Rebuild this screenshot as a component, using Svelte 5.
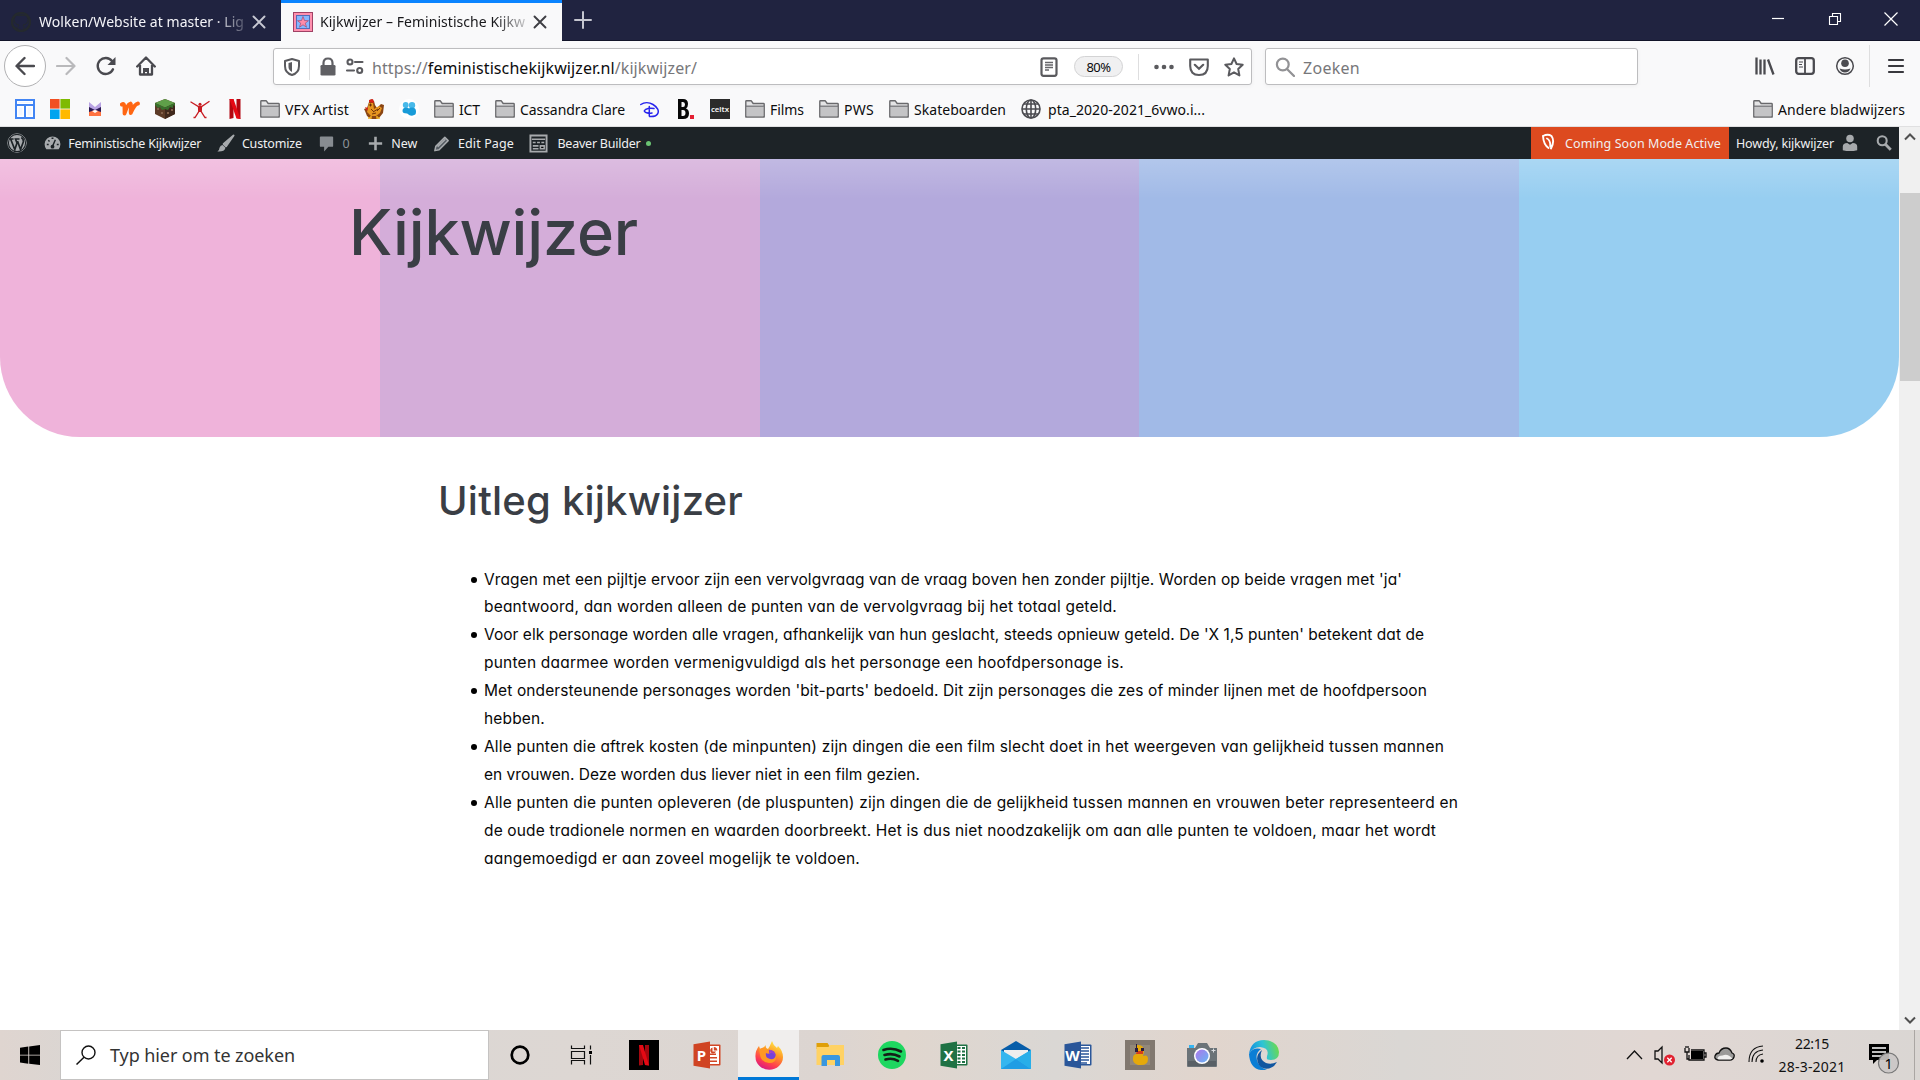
<script>
  // Tracks the text of a label so that it fills the given width in pixels.
  function fit(node, width) {
    const natural = node.getBoundingClientRect().width;
    node.style.letterSpacing = (width - natural) / node.textContent.length + 'px';
  }

  const bookmarks = [
    { icon: 'panel' }, { icon: 'microsoft' }, { icon: 'cat' }, { icon: 'wattpad' },
    { icon: 'block' }, { icon: 'figure' }, { icon: 'netflix' },
    { icon: 'folder', label: 'VFX Artist', width: 64 },
    { icon: 'chicken' }, { icon: 'people' },
    { icon: 'folder', label: 'ICT', width: 21 },
    { icon: 'folder', label: 'Cassandra Clare', width: 105 },
    { icon: 'disney' }, { icon: 'bdot' }, { icon: 'celtx' },
    { icon: 'folder', label: 'Films', width: 34 },
    { icon: 'folder', label: 'PWS', width: 30 },
    { icon: 'folder', label: 'Skateboarden', width: 92 },
    { icon: 'globe', label: 'pta_2020-2021_6vwo.i...', width: 157 }
  ];

  const items = [
    [
      ["Vragen met een pijltje ervoor zijn een vervolgvraag van de vraag boven hen zonder pijltje. Worden op beide vragen met 'ja'", 918],
      ['beantwoord, dan worden alleen de punten van de vervolgvraag bij het totaal geteld.', 633]
    ],
    [
      ["Voor elk personage worden alle vragen, afhankelijk van hun geslacht, steeds opnieuw geteld. De 'X 1,5 punten' betekent dat de", 940],
      ['punten daarmee worden vermenigvuldigd als het personage een hoofdpersonage is.', 640]
    ],
    [
      ["Met ondersteunende personages worden 'bit-parts' bedoeld. Dit zijn personages die zes of minder lijnen met de hoofdpersoon", 943],
      ['hebben.', 61]
    ],
    [
      ['Alle punten die aftrek kosten (de minpunten) zijn dingen die een film slecht doet in het weergeven van gelijkheid tussen mannen', 960],
      ['en vrouwen. Deze worden dus liever niet in een film gezien.', 436]
    ],
    [
      ['Alle punten die punten opleveren (de pluspunten) zijn dingen die de gelijkheid tussen mannen en vrouwen beter representeerd en', 974],
      ['de oude tradionele normen en waarden doorbreekt. Het is dus niet noodzakelijk om aan alle punten te voldoen, maar het wordt', 952],
      ['aangemoedigd er aan zoveel mogelijk te voldoen.', 376]
    ]
  ];

  const apps = ['cortana', 'taskview', 'netflixapp', 'powerpoint', 'firefox', 'explorer', 'spotify', 'excel', 'mail', 'word', 'duck', 'camera', 'edge'];
</script>

{#snippet icon(name)}
  <svg class="ic" viewBox="0 0 20 20" aria-hidden="true">
    {#if name === 'panel'}
      <rect width="20" height="20" fill="#4285f4" /><path d="M2 2h16v3H2zM2 7h7v11H2zM11 7h7v11h-7z" fill="#fff" /><path d="M3 3h14v1H3zM3.500 8.500h4v8h-4zM12.500 8.500h4v8h-4z" fill="#f1f5ff" />
    {:else if name === 'microsoft'}
      <path d="M0 0h9.600v9.600H0z" fill="#f25022" /><path d="M10.400 0H20v9.600h-9.600z" fill="#7fba00" /><path d="M0 10.400h9.600V20H0z" fill="#00a4ef" /><path d="M10.400 10.400H20V20h-9.600z" fill="#ffb900" />
    {:else if name === 'cat'}
      <path d="M4 3l6 5 6-5v10H4z" fill="#b9a3e3" /><path d="M4 8l6 3 6-3v5H4z" fill="#2c1b54" /><path d="M4 13l6-2 6 2v4H4z" fill="#ff7240" /><path d="M7 12l3 2 3-2-3-1z" fill="#fff" />
    {:else if name === 'wattpad'}
      <path d="M1.800 5.500C5 3 4.500 9 4.500 14.500 6.500 9 8 5 10.500 4.500c1.800 1-.5 6 .3 9.500C12.500 10 14.500 5 18 4.500" fill="none" stroke="#ff6612" stroke-width="3.800" stroke-linecap="round" stroke-linejoin="round" />
    {:else if name === 'block'}
      <path d="M0 4l10-4 10 4v11l-10 5-10-5z" fill="#5c3b27" /><path d="M10 8l10-4v11l-10 5z" fill="#3f281c" /><path d="M0 4l10-4 10 4-10 4.500z" fill="#5f9f49" /><path d="M0 4l10 4.500L20 4v3l-2-1v3l-3-1-2 3-3-1-3 1-2-3-2 1-3-3z" fill="#38702c" /><path d="M2 9h2v2H2zM6 13h2v2H6zM12 13h2v2h-2zM16 10h2v2h-2z" fill="#82604a" />
    {:else if name === 'figure'}
      <path d="M.5 2.800L8 7.300h4l7.500-5M8.500 7.500l.3 5L5 18.500H3.500M11.500 7.500l-.3 5 3.800 6h1.500" fill="none" stroke="#c81c22" stroke-width="1.300" /><path d="M8 7h4l-.6 6H8.600z" fill="#c81c22" /><circle cx="10" cy="5.300" r="1.500" fill="#c81c22" />
    {:else if name === 'netflix'}
      <path d="M4.500 0h4v19l-4 1zM11.500 0h4v20l-4-1z" fill="#b20710" /><path d="M4.500 0h4l7 20-4-.5z" fill="#e50914" />
    {:else if name === 'folder'}
      <path d="M.8 18V2.500q0-.7.700-.7h4.800l1.900 2.700h10.300q.7 0 .7.700V18z" fill="#e4e4e5" stroke="#69696c" stroke-width="1.400" stroke-linejoin="round" /><path d="M2 8h16v9.200H2z" fill="#c4c4c6" /><path d="M1 7.200h18" stroke="#737376" stroke-width="1.300" />
    {:else if name === 'chicken'}
      <path d="M5 3l2-3 3 2 1 4 2 3 4-4 3 1-1 8-4 5-2 1H7l-4-3-2-5-1-2 3-1z" fill="#8a4512" /><path d="M5 4h4l1 6 5-3 3 2-2 5-4 3H7l-4-4 1-5z" fill="#e69520" /><path d="M5 3V1l4-1 1 4zM1 8l3 1-1 3z" fill="#d92118" /><path d="M6 5h1v2H6zM9 13l5-3M7 10l3 3M13 12l3-3M8 15l4-1" stroke="#743509" stroke-width="1" /><path d="M7 17v2H4M13 17v2h3" fill="none" stroke="#eead22" stroke-width="1.500" />
    {:else if name === 'people'}
      <circle cx="10" cy="10" r="10" fill="#fff" /><circle cx="6.700" cy="6" r="2.900" fill="#48b9e9" /><circle cx="13" cy="6.300" r="3.200" fill="#48b9e9" /><path d="M3.500 12q0-3.500 3.500-3.500 2 0 3 1 1-1 3-1 4 0 4 4 0 3.500-2 3.500-2 1.500-5 0-1-1.500-2-1.500-4.500 0-4.500-2.500z" fill="#189bd8" />
    {:else if name === 'disney'}
      <path d="M.8 5.500C4 3.300 9 3 13 5.500c4.500 2.700 6.500 6.500 4.500 9.500-1.500 2.300-5 2.700-8 2.500M14 9.500c-4-.8-8.500 0-9.500 2-.8 1.800 4 3.500 7.500 2.500M9.300 7.500V17" fill="none" stroke="#2824ed" stroke-width="1.500" stroke-linecap="round" />
    {:else if name === 'bdot'}
      <path d="M3 0h5q5 0 5 5 0 3-2 4.500 3 1 3 5 0 5.500-6 5.500H3zM6.500 3v5H8q2 0 2-2.500T8 3zM6.500 11v6H8q2.500 0 2.500-3T8 11z" fill="#080808" fill-rule="evenodd" /><path d="M15 16h4v4h-4z" fill="#e42032" />
    {:else if name === 'celtx'}
      <rect width="20" height="20" fill="#2b2b2b" /><text x="1" y="12.800" font-size="7.800" font-weight="600" textLength="18" fill="#f4f4f4">celtx</text>
    {:else if name === 'globe'}
      <g fill="none" stroke="#4b4b50" stroke-width="1.600"><circle cx="10" cy="10" r="9" /><ellipse cx="10" cy="10" rx="4.700" ry="9" /><path d="M1 10h18M10 1v18M3 5h14M3 15h14" /></g>
    {:else if name === 'wordpress'}
      <circle cx="10" cy="10" r="9.200" fill="#a7aaad" stroke="#a7aaad" /><circle cx="10" cy="10" r="8.600" fill="none" stroke="#1d2327" stroke-width="1.100" /><path d="M2.600 6h4M3.800 6.500l4 10L10 10 8.500 6h4M10.500 8l3 8.500 2.800-7.500q.5-3-2-4.500" fill="none" stroke="#1d2327" stroke-width="1.700" />
    {:else if name === 'gauge'}
      <path d="M3.500 16A8.300 8.300 0 1 1 16.500 16z" fill="#a7aaad" /><circle cx="10" cy="13.300" r="2" fill="#1d2327" /><path d="M10 13l3-7M4 11h2M14.500 11h2M5.600 6.500l1.300 1.300M9 4.500h2" stroke="#1d2327" stroke-width="1.500" />
    {:else if name === 'brush'}
      <path d="M18.500 1.500L8 10.500l2.500 2.500z" fill="#a7aaad" stroke="#a7aaad" stroke-width="2" stroke-linejoin="round" /><path d="M7 11.500l3 3q-1 4.500-8.500 4 2-1 2.200-4 1-3 3.300-3z" fill="#a7aaad" />
    {:else if name === 'comment'}
      <path d="M4 2.500h12q1 0 1 1v9q0 1-1 1h-4l-4.500 5v-5H4q-1 0-1-1v-9q0-1 1-1z" fill="#878c91" />
    {:else if name === 'plus'}
      <path d="M10 3v14M3 10h14" stroke="#a7aaad" stroke-width="2.700" />
    {:else if name === 'pencil'}
      <path d="M4 13L13.500 3.500l3.500 3.500L7.500 16.500 3 17.500zM6 13.500l8-8" fill="#555c63" stroke="#a7aaad" stroke-width="1.600" stroke-linejoin="round" />
    {:else if name === 'builder'}
      <path d="M1.500 1.500h17v17h-17z" fill="#1d2327" stroke="#a7aaad" stroke-width="2" /><path d="M3 5.500h14M4 9h3M8.500 9h3M13 9h3M4 12.500h6M4 15.500h6M12 12.500h4v3h-4z" stroke="#a7aaad" stroke-width="1.600" />
    {:else if name === 'seed'}
      <path d="M4 3q5-2.500 8.500 0 3.500 5-.5 12.500M4 3q.5 8.500 5.500 12M8 5.500q3.500 1.500 3.300 8" fill="none" stroke="#fff" stroke-width="1.900" stroke-linecap="round" />
    {:else if name === 'person'}
      <circle cx="10" cy="5" r="4.200" fill="#a7aaad" /><path d="M2 18v-4q0-4 5-4l3 2 3-2q5 0 5 4v4q-8 2-16 0z" fill="#a7aaad" />
    {:else if name === 'find'}
      <circle cx="8" cy="7.500" r="5" fill="none" stroke="#a7aaad" stroke-width="2.300" /><path d="M11.500 11.500l6 6" stroke="#a7aaad" stroke-width="3.200" />
    {:else if name === 'github'}
      <path d="M7 19v-3q-4 1-5-2M13 19v-4q0-1-1-2 5-1 5-5 0-2-1-3V2l-3 1.500Q10 3 7 3.500L4 2v3Q3 6 3 8q0 4 5 5-1 1-1 2" fill="#202340" stroke="#24292e" stroke-width="1" /><circle cx="10" cy="10" r="9" fill="none" stroke="#24292e" stroke-width="2.400" />
    {:else if name === 'star-site'}
      <path d="M0 0h20v20H0z" fill="#a04164" /><path d="M1 1h18v18H1z" fill="#ff90ae" /><path d="M3 3h14v14H3z" fill="#536db7" /><path d="M4 4h12v12H4z" fill="#86b7ff" /><path d="M10 4.500l1.500 4 4 .2-3.200 2.500 1.200 4-3.500-2.400-3.500 2.400 1.200-4-3.200-2.500 4-.2z" fill="#ff8ca8" stroke="#993d67" stroke-width=".6" />
    {:else if name === 'close'}
      <path d="M4.500 4.500l11 11M15.500 4.500l-11 11" stroke="currentColor" stroke-width="1.900" stroke-linecap="round" />
    {:else if name === 'newtab'}
      <path d="M10 2v16M2 10h16" stroke="#c5c6d0" stroke-width="2" stroke-linecap="round" />
    {:else if name === 'back'}
      <path d="M19 10H1.800M9.500 2l-8 8 8 8" fill="none" stroke="#4a4a4f" stroke-width="2.400" stroke-linecap="round" stroke-linejoin="round" />
    {:else if name === 'forward'}
      <path d="M1 10h17.200M10.500 2l8 8-8 8" fill="none" stroke="#b9b9bb" stroke-width="2.200" stroke-linecap="round" stroke-linejoin="round" />
    {:else if name === 'reload'}
      <path d="M17 13.300A8 8 0 1 1 16 5" fill="none" stroke="#4a4a4f" stroke-width="2.400" stroke-linecap="round" /><path d="M19.500 1v8h-8z" fill="#4a4a4f" />
    {:else if name === 'home'}
      <path d="M1.200 10.500L10 1.500l8.800 9M4 9v9.500h12V9" fill="none" stroke="#4a4a4f" stroke-width="2.300" stroke-linejoin="round" stroke-linecap="round" /><path d="M7 18v-6h6v6h-2v-2H9v2z" fill="#4a4a4f" />
    {:else if name === 'shield'}
      <path d="M10 2l7 2v5q0 7-7 9-7-2-7-9V4z" fill="none" stroke="#5a5a5e" stroke-width="2" stroke-linejoin="round" /><path d="M10 5l-3.500 1v4q0 3 3.500 5z" fill="#5a5a5e" />
    {:else if name === 'lock'}
      <path d="M5.500 9V6q0-4.500 4.500-4.500T14.500 6v3" fill="none" stroke="#606064" stroke-width="2.200" /><rect x="2.500" y="8" width="15" height="10.500" rx="1.300" fill="#606064" />
    {:else if name === 'permissions'}
      <g fill="none" stroke="#5b5b5f" stroke-width="2.100"><circle cx="5" cy="5" r="2.500" /><path d="M10 5h7.500M2 13.500h7" stroke-linecap="round" /><circle cx="14.700" cy="13.500" r="2.500" /></g>
    {:else if name === 'reader'}
      <rect x="2.500" y="1.300" width="15" height="17.500" rx="2" fill="none" stroke="#5a5a5e" stroke-width="2.200" /><path d="M6 5.500h8M6 8h8M6 10.500h8M6 13h4" stroke="#66666a" stroke-width="1.300" />
    {:else if name === 'dots'}
      <circle cx="2.500" cy="10" r="2.300" fill="#5a5a5e" /><circle cx="10" cy="10" r="2.300" fill="#5a5a5e" /><circle cx="17.500" cy="10" r="2.300" fill="#5a5a5e" />
    {:else if name === 'pocket'}
      <path d="M1.200 2.500h17.600V9q0 9-8.800 9T1.200 9z" fill="none" stroke="#5a5a5e" stroke-width="2.100" stroke-linejoin="round" /><path d="M5.800 7.800l4.200 4 4.200-4" fill="none" stroke="#5a5a5e" stroke-width="2.200" stroke-linecap="round" />
    {:else if name === 'star'}
      <path d="M10 1.400l2.600 5.600 6.100.8-4.500 4.200 1.200 6.400L10 15.300l-5.400 3.100L5.800 12 1.300 7.800 7.400 7z" fill="none" stroke="#5a5a5e" stroke-width="2" stroke-linejoin="round" />
    {:else if name === 'search'}
      <circle cx="7.800" cy="7.500" r="5.900" fill="none" stroke="#929295" stroke-width="2.200" /><path d="M12 12l7 7" stroke="#929295" stroke-width="2.300" stroke-linecap="round" />
    {:else if name === 'library'}
      <path d="M1.500 1.500v17M5.500 3.500v15M9.500 3.500v15M13 3.500l5.500 15" stroke="#4a4a4f" stroke-width="2.300" />
    {:else if name === 'sidebar'}
      <rect x="1.200" y="2.200" width="17.600" height="15.600" rx="2.500" fill="none" stroke="#4a4a4f" stroke-width="2.300" /><path d="M10 2v16" stroke="#4a4a4f" stroke-width="1.800" /><path d="M4 6h4M4 8.500h3M4 11h4" stroke="#4a4a4f" stroke-width="1.200" />
    {:else if name === 'account'}
      <circle cx="10" cy="10" r="8.300" fill="none" stroke="#4a4a4f" stroke-width="1.500" /><circle cx="10" cy="7.200" r="3.800" fill="#4a4a4f" /><path d="M4.500 12.500q3 1 5.500 1t5.500-1q-1.500 4-5.500 4t-5.500-4z" fill="#4a4a4f" />
    {:else if name === 'menu'}
      <path d="M3 4h14M3 10h14M3 16h14" stroke="#38383d" stroke-width="2.200" stroke-linecap="round" />
    {:else if name === 'minimize'}
      <path d="M4 9.500h12" stroke="#fff" stroke-width="1.200" />
    {:else if name === 'restore'}
      <path d="M4.500 7.500h8v8h-8zM7.500 7V4.500h8v8H13" fill="none" stroke="#fff" stroke-width="1.100" />
    {:else if name === 'exit'}
      <path d="M3.500 3.500l13 13M16.500 3.500l-13 13" stroke="#fff" stroke-width="1.200" />
    {:else if name === 'up'}
      <path d="M5 12.500l5-5 5 5" fill="none" stroke="#505050" stroke-width="2" />
    {:else if name === 'down'}
      <path d="M5 7.500l5 5 5-5" fill="none" stroke="#505050" stroke-width="2" />
    {:else if name === 'windows'}
      <path d="M0 2.700l8.300-1.200v8.200H0zM9.200 1.400L20 0v9.700H9.200zM0 10.500h8.300v8.300L0 17.500zM9.200 10.500H20V20L9.200 18.700z" fill="#000" />
    {:else if name === 'tasksearch'}
      <circle cx="12.500" cy="7.500" r="6.500" fill="none" stroke="#111" stroke-width="1.400" /><path d="M8 12.200L.5 19.500" stroke="#111" stroke-width="1.500" />
    {/if}
  </svg>
{/snippet}

{#snippet office(letter, colour, dark)}
  <path d="M16 4.500h11.500q1 0 1 1v19q0 1-1 1H16z" fill={colour} />
  <path d="M16 6h11v18H16z" fill="#fff" />
  <path d="M1.500 4.300L18 1.500v27L1.500 25.700z" fill={dark} />
  <text x="9.500" y="20.500" text-anchor="middle" font-size="15" font-weight="700" fill="#fff">{letter}</text>
{/snippet}

{#snippet app(name)}
  <svg class="app-icon" viewBox="0 0 30 30" aria-hidden="true">
    {#if name === 'cortana'}
      <circle cx="15" cy="15" r="8.300" fill="none" stroke="#000" stroke-width="2.700" />
    {:else if name === 'taskview'}
      <path d="M5.500 5.500v3h13v-3M5.500 24.500v-4h13v4M5.500 11.500h13v7h-13zM24.500 5.500v4M24.500 15v9.500" fill="none" stroke="#111" stroke-width="1.200" /><path d="M23 11h3v3h-3z" fill="#000" />
    {:else if name === 'netflixapp'}
      <path d="M0 0h30v30H0z" fill="#000" /><path d="M10 5h4v20l-4 .5zM16 5h4v20.500l-4-.5z" fill="#a5070f" /><path d="M10 5h4l6 20.500-4-.5z" fill="#e50914" />
    {:else if name === 'powerpoint'}
      {@render office('P', '#d24625', '#d04423')}
      <path d="M18 13.500h6V15h-6zM18 17h7v1.500h-7zM18 20.500h7V22h-7z" fill="#d24625" /><path d="M20.500 7.500a3 3 0 1 0 3.500 4h-3.500z" fill="#d24625" /><path d="M21.800 7v3.500h3.500q0-3.500-3.500-3.500z" fill="#d24625" />
    {:else if name === 'excel'}
      {@render office('X', '#207245', '#1f7244')}
      <path d="M18.500 8h3M23 8h3M18.500 11.500h3M23 11.500h3M18.500 15h3M23 15h3M18.500 18.500h3M23 18.500h3M18.500 22h3M23 22h3" stroke="#207245" stroke-width="1.800" />
    {:else if name === 'word'}
      {@render office('W', '#2b579a', '#2a5699')}
      <path d="M18 8h8M18 11h8M18 14h8M18 17h8M18 20h8M18 23h6" stroke="#2b579a" stroke-width="1.500" />
    {:else if name === 'firefox'}
      <defs><linearGradient id="flame" x1=".8" y1="0" x2=".3" y2="1"><stop offset="0" stop-color="#fff44f" /><stop offset=".4" stop-color="#ff9a25" /><stop offset=".75" stop-color="#ff3c50" /><stop offset="1" stop-color="#d61885" /></linearGradient></defs>
      <path d="M18 1q1 4 5 7l1-2q5 5 5 11A13.500 12.500 0 0 1 1.500 17Q1 11 5 6l1 3 4-2q2-2 2-2-1 3 2 4 2-3 4-8z" fill="url(#flame)" /><circle cx="15.500" cy="16" r="6.200" fill="#7542d7" /><path d="M5 9q6-2 9 1l5 1q-4 4-7 2-1 5 4 6 5 1 6-4 1 8-7 8-8-1-9-8z" fill="#ff9824" /><path d="M15 10q6 0 6 6-2-4-6-3z" fill="#983dd4" />
    {:else if name === 'explorer'}
      <path d="M1.500 3h11l2 3-3 3h-10z" fill="#df9f08" /><path d="M1.500 7h12l2-2H29v20H1.500z" fill="#ffd264" /><path d="M6.500 26V17q0-2 2-2H23q2 0 2 2v9h-5v-6h-8v6z" fill="#3997df" />
    {:else if name === 'spotify'}
      <circle cx="15" cy="15" r="14" fill="#1ed760" /><path d="M6.500 10q9-3 17.500 1.500M7.500 15q8-2.300 15 1.500M8.500 19.500q6.500-2 12.500 1.300" fill="none" stroke="#141f18" stroke-width="2.600" stroke-linecap="round" />
    {:else if name === 'mail'}
      <path d="M0 10L15 1l15 9v4H0z" fill="#075da9" /><path d="M3 10h24v10H3z" fill="#eee" /><path d="M0 10l15 9 15-9v19H0z" fill="#35b6ef" /><path d="M0 29l15-10 15 10z" fill="#209de4" /><path d="M30 10v19L15 19z" fill="#28aee9" />
    {:else if name === 'duck'}
      <path d="M0 0h30v30H0z" fill="#81786f" /><path d="M5 5h20v20H5z" fill="#91877a" /><path d="M12 5q7-1 7 7l-1 4q5-2 5 3 0 6-7 6H13q-6-2-5-7 0-4 4-4-3-7 0-9z" fill="#e5a90a" /><path d="M12 11h6v3h-7z" fill="#d53d1b" /><path d="M10 8h3v4h-3zM16 8h3v3h-3zM11 4h1v5h-1z" fill="#281d3e" />
    {:else if name === 'camera'}
      <path d="M0 8h8l3-5h9l3 5h7v18q0 1-1 1H1q-1 0-1-1z" fill="#6b7378" /><path d="M2 5h5v3H2z" fill="#35b4f0" /><path d="M1 21h28v5H1z" fill="#596066" /><circle cx="15" cy="16" r="8" fill="#fff" /><defs><linearGradient id="lens" x2="1" y2="1"><stop stop-color="#ad76eb" /><stop offset="1" stop-color="#67b6f4" /></linearGradient></defs><circle cx="15" cy="16" r="6.500" fill="url(#lens)" /><path d="M26.500 8.500v4M24.500 10.500h4" stroke="#d9dce0" />
    {:else if name === 'edge'}
      <defs><linearGradient id="wave" x1="0" y1=".5" x2="1" y2=".3"><stop stop-color="#128de0" /><stop offset=".5" stop-color="#2fc4d4" /><stop offset="1" stop-color="#70db45" /></linearGradient></defs>
      <path d="M0 14Q2 0 15 0q14 1 15 12 0 8-8 8-6 0-4-4 3-8-7-9Q4 7 0 14z" fill="url(#wave)" /><path d="M0 14Q4 7 12 9q-7 5-3 14 3 5 9 7Q1 32 0 14z" fill="#0b7ed5" /><path d="M13 10q-8 6-3 15 6 7 15 1l3-4q-6 3-11 1-8-4-4-13z" fill="#1056a0" /><path d="M13 12q-2 4 1 8 4 4 10 2l4-1q-4 2-9 0-2-1-1-5 1-5-5-4z" fill="#ddd8d5" />
    {/if}
  </svg>
{/snippet}

<div class="screen">
  <header class="tabs">
    <div class="tab">
      {@render icon('github')}
      <div class="tab-title"><span use:fit={205}>Wolken/Website at master · Lig</span></div>
      {@render icon('close')}
    </div>
    <div class="tab active">
      {@render icon('star-site')}
      <div class="tab-title"><span use:fit={205}>Kijkwijzer – Feministische Kijkw</span></div>
      {@render icon('close')}
    </div>
    <div class="new-tab">{@render icon('newtab')}</div>
    <div class="window-buttons">{@render icon('minimize')}{@render icon('restore')}{@render icon('exit')}</div>
  </header>

  <nav class="toolbar">
    <div class="back">{@render icon('back')}</div>
    <div class="nav-icons">{@render icon('forward')}{@render icon('reload')}{@render icon('home')}</div>
    <div class="field url">
      {@render icon('shield')}<i class="rule"></i>{@render icon('lock')}{@render icon('permissions')}
      <span class="address" use:fit={325}>https://<b>feministischekijkwijzer.nl</b>/kijkwijzer/</span>
      <div class="url-actions">
        {@render icon('reader')}<span class="zoom">80%</span><i class="rule"></i>
        <div class="page-actions">{@render icon('dots')}{@render icon('pocket')}{@render icon('star')}</div>
      </div>
    </div>
    <div class="field find">{@render icon('search')}<span use:fit={57}>Zoeken</span></div>
    <div class="tools">{@render icon('library')}{@render icon('sidebar')}{@render icon('account')}<i class="rule tall"></i>{@render icon('menu')}</div>
  </nav>

  <div class="bookmarks">
    {#each bookmarks as mark}
      <div class="bookmark">
        {@render icon(mark.icon)}
        {#if mark.label}<span use:fit={mark.width}>{mark.label}</span>{/if}
      </div>
    {/each}
    <div class="bookmark others">{@render icon('folder')}<span use:fit={127}>Andere bladwijzers</span></div>
  </div>

  <main>
    <div class="viewport">
      <div class="admin">
        <div class="admin-item logo">{@render icon('wordpress')}</div>
        <div class="admin-item">{@render icon('gauge')}<span use:fit={133}>Feministische Kijkwijzer</span></div>
        <div class="admin-item">{@render icon('brush')}<span use:fit={60}>Customize</span></div>
        <div class="admin-item count">{@render icon('comment')}<span use:fit={8}>0</span></div>
        <div class="admin-item">{@render icon('plus')}<span use:fit={26}>New</span></div>
        <div class="admin-item">{@render icon('pencil')}<span use:fit={56}>Edit Page</span></div>
        <div class="admin-item beaver">{@render icon('builder')}<span use:fit={83}>Beaver Builder</span><i class="dot"></i></div>
        <div class="soon">{@render icon('seed')}<span use:fit={156}>Coming Soon Mode Active</span></div>
        <div class="howdy"><span use:fit={98}>Howdy, kijkwijzer</span>{@render icon('person')}{@render icon('find')}</div>
      </div>
      <section class="hero"><h1><span use:fit={289}>Kijkwijzer</span></h1></section>
      <article>
        <h2><span use:fit={305}>Uitleg kijkwijzer</span></h2>
        <ul>
          {#each items as lines}
            <li>
              {#each lines as [text, width]}
                <div class="line"><span use:fit={width}>{text}</span></div>
              {/each}
            </li>
          {/each}
        </ul>
      </article>
    </div>
    <div class="scrollbar">{@render icon('up')}<div class="thumb"></div>{@render icon('down')}</div>
  </main>

  <footer>
    <div class="start">{@render icon('windows')}</div>
    <div class="task-search">{@render icon('tasksearch')}<span use:fit={185}>Typ hier om te zoeken</span></div>
    <div class="apps">
      {#each apps as name}
        <div class="app" class:running={name === 'firefox'}>{@render app(name)}</div>
      {/each}
    </div>
    <div class="tray">
      <svg viewBox="0 0 140 30" aria-hidden="true">
        <g fill="none" stroke="#111" stroke-width="1.300">
          <path d="M3 19l7.500-8 7.500 8" />
          <path d="M31 11h3l4-4v16l-4-4h-3z" />
          <path d="M67 10h13v10H65v-5M80 13h2v4h-2M61 8v4h4V8M62 8V6M64 8V6M63 12v7h2" />
          <path d="M94 20q-4-1-3-4 1-3 4-3 2-5 7-5 4 0 6 5 3 1 2 4-1 3-4 3z" fill="#9b9a99" />
          <path d="M125 22q0-15 14-16M128 22q0-11 11-12M132 22q0-7 7-8" stroke-width="1.100" />
        </g>
        <path d="M67 11h12v8H67z" fill="#000" /><path d="M93.500 19q0-3.500 5-3.500 5-2.500 10 3l-2 1H95z" fill="#f1f0ef" />
        <circle cx="138" cy="21" r="1.800" /><circle cx="45.500" cy="20" r="5.500" fill="#e12130" /><path d="M43.300 17.800l4.400 4.400M47.700 17.800l-4.400 4.400" stroke="#fff" stroke-width="1.300" />
      </svg>
      <div class="clock"><span use:fit={34}>22:15</span><span use:fit={67}>28-3-2021</span></div>
      <svg class="notice" viewBox="0 0 32 34" aria-hidden="true">
        <path d="M1 2h20v16H9l-4 4v-4H1z" /><path d="M4 6h14M4 10h14M4 14h10" stroke="#fff" stroke-width="1.500" /><circle cx="20.500" cy="21" r="10" fill="#cac7c5" fill-opacity=".9" stroke="#777" stroke-width="1.200" /><text x="16.500" y="26.500" font-size="14.500">1</text>
      </svg>
      <i class="desktop-edge"></i>
    </div>
  </footer>
</div>

<style>
  :global(body) { overflow: hidden; }
  .screen { width: 1920px; height: 1080px; display: flex; flex-direction: column; background: #f9f9fa; color: #0c0c0d; font-family: "Noto Sans", "Open Sans", sans-serif; font-size: 14px; overflow: hidden; }
  .screen * { box-sizing: border-box; }
  span { display: inline-block; white-space: nowrap; flex: none; }
  .ic { width: 20px; height: 20px; flex: none; display: block; }
  .rule { width: 1px; height: 26px; background: #dededf; flex: none; }
  .tabs { height: 41px; flex: none; display: flex; background: #202340; border-bottom: 1px solid #121429; }
  .tab { width: 281px; height: 41px; padding: 2px 11px 0; display: flex; align-items: center; color: #f4f4f8; }
  .tab .ic:last-child { margin-left: 4px; color: #c8c9d3; }
  .tab-title { width: 206px; margin-left: 8px; white-space: nowrap; mask-image: linear-gradient(90deg, #000 85%, transparent 104%); }
  .tab.active { background: #f9f9fa; color: #18181b; padding: 0 12px; border-top: 3px solid #0a84ff; }
  .active .tab-title { margin-left: 7px; margin-top: -1px; }
  .active .ic { margin-top: -1px; }
  .tab.active .ic:last-child { color: #3e3e43; margin-left: 4px; }
  .new-tab { padding: 10px 11px; }
  .window-buttons { margin-left: auto; padding: 9px 19px 0 0; display: flex; gap: 36.500px; }
  .toolbar { height: 50px; flex: none; display: flex; align-items: center; }
  .back { width: 42px; height: 42px; margin-left: 4px; border: 1px solid #b1b1b3; border-radius: 50%; background: #fff; display: grid; place-items: center; }
  .nav-icons { display: flex; gap: 20px; margin-left: 10px; }
  .field { height: 37px; margin-top: 1px; border: 1px solid #bdbdbf; border-radius: 3px; background: #fff; display: flex; align-items: center; box-shadow: 0 1px 4px #0000000d; }
  .url { width: 979px; margin-left: 117px; padding-left: 8px; }
  .url > .rule { margin: 0 8px 0 7px; }
  .url .ic + .ic { margin-left: 7px; }
  .address, .find span { font-size: 16px; color: #77777a; margin-left: 7px; padding-top: 2px; }
  .find span { margin-left: 8px; }
  .address b { font-weight: 400; color: #0c0c0d; }
  .url-actions { margin-left: auto; padding-right: 7px; display: flex; align-items: center; }
  .zoom { width: 49px; height: 21px; margin: 0 15px; border: 1px solid #d3d3d4; border-radius: 11px; background: #f0f0f1; font-size: 13px; line-height: 20px; text-align: center; letter-spacing: -.5px; }
  .page-actions { display: flex; gap: 15px; margin-left: 15px; }
  .url .page-actions .ic + .ic { margin-left: 0; }
  .find { width: 373px; margin-left: 13px; padding-left: 9px; }
  .tools { margin-left: auto; padding-right: 14px; display: flex; gap: 20px; align-items: center; }
  .tools .tall { height: 42px; margin-left: -6px; margin-right: -4px; }
  .bookmarks { height: 36px; flex: none; display: flex; align-items: center; gap: 15px; padding: 1px 15px 0; border-bottom: 1px solid #e0e0e1; }
  .bookmark { display: flex; align-items: center; gap: 5px; }
  .bookmark:nth-child(19) { gap: 7px; }
  .others { margin-left: auto; }
  main { height: 903px; flex: none; display: flex; background: #fff; }
  .viewport { width: 1899px; }
  .admin { height: 32px; display: flex; align-items: center; background: #1d2327; color: #f0f0f1; font-size: 12.500px; }
  .admin span { padding-top: 1px; }
  .admin-item { display: flex; align-items: center; gap: 6.700px; margin-right: 15px; }
  .admin .ic { width: 20px; height: 20px; }
  .admin .admin-item:not(.logo) .ic { width: 19px; height: 19px; }
  .admin .logo { margin: 0 15.500px 0 7px; }
  .count { color: #8c9298; }
  .admin .beaver { gap: 9.500px; }
  .dot { width: 5px; height: 5px; margin-left: -4px; border-radius: 50%; background: #6bc373; }
  .soon { width: 198px; height: 32px; margin-left: auto; padding-left: 8px; display: flex; align-items: center; gap: 6px; background: #dd4a1f; }
  .howdy { width: 170px; padding-left: 7px; display: flex; align-items: center; gap: 7px; }
  .howdy .ic:last-child { margin-left: 9px; }
  .admin .howdy .ic { width: 18px; height: 18px; }
  .hero { height: 278px; border-radius: 0 0 80px 80px; padding: 24px 0 0 349px; background: linear-gradient(#ffffff30, #ffffff00 40px), linear-gradient(90deg, #efb3da 20%, #d4add9 20% 40%, #b3a9dc 40% 60%, #a1bae7 60% 80%, #97cef1 80%); }
  h1, h2 { margin: 0; color: #3a3e45; font-family: Inter, sans-serif; font-weight: 540; font-feature-settings: "cv11"; }
  h1 { font-size: 63px; line-height: 98px; }
  article { padding: 34px 0 0 438px; }
  h2 { font-size: 40px; line-height: 60px; }
  ul { margin: 34.600px 0 0; padding: 0 0 0 46px; list-style: none; color: #080808; font: 15.500px/27.900px Inter, sans-serif; font-feature-settings: "cv11"; }
  li { display: grid; grid-template-columns: auto; }
  .line { height: 27.900px; display: flex; align-items: center; }
  .line:first-child::before { content: ""; width: 6px; height: 6px; margin: 0 7px 0 -13px; border-radius: 50%; background: #000; }
  .scrollbar { width: 21px; padding-left: 1px; background: #f0f0f0; display: flex; flex-direction: column; }
  .thumb { height: 188px; margin: 46px 0 auto; background: #cdcdcd; }
  footer { height: 50px; flex: none; display: flex; background: linear-gradient(90deg, #dfd5d0, #d9d6d3 5%, #ddd7d3 30%, #dcd5d1 43%, #e0d6ce 47%, #dad7d4 55%, #e1d5cd 63%, #dad7d4 73%, #e1d7d3 86%, #dad6d3); }
  .start { width: 60px; padding: 15px 20px; }
  .task-search { width: 429px; border: 1px solid #c5c3c2; background: #fff; display: flex; align-items: center; padding-left: 15px; gap: 14px; font-size: 18px; color: #333; }
  .apps { display: flex; }
  .app { width: 62px; height: 50px; display: grid; place-items: center; }
  .app:nth-child(1) { width: 61px; }
  .app:nth-child(2) { width: 61px; }
  .app:nth-child(3) { width: 66px; }
  .app:nth-child(4) { width: 61px; padding-right: 2px; }
  .app:nth-child(5) { width: 61px; }
  .app-icon { width: 30px; height: 30px; display: block; }
  .running { background: #f0eeed; border-bottom: 3px solid #0078d7; padding-top: 3px; }
  .tray { margin-left: auto; display: flex; align-items: center; }
  .tray > svg:first-child { width: 140px; height: 30px; }
  .clock { width: 102px; display: flex; flex-direction: column; align-items: center; font-size: 14px; line-height: 23px; color: #111; margin-left: -3px; }
  .notice { width: 32px; height: 34px; margin: 7px 1px 0 5px; }
  .desktop-edge { width: 1px; height: 50px; margin: 0 5px 0 13px; background: #aaa6a3; }
</style>
